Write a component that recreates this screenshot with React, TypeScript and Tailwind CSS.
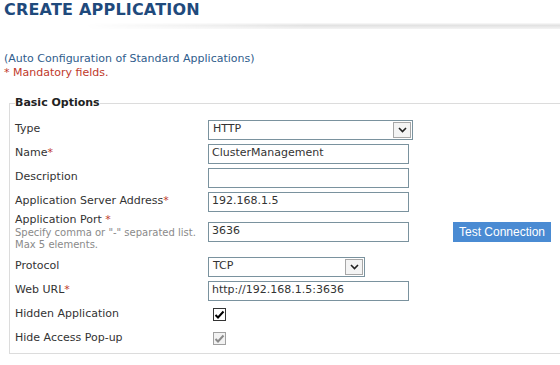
import type { ReactNode } from "react";

const font = "font-['DejaVu_Sans',Verdana,sans-serif]";

function Chevron() {
  return (
    <span className="flex h-[16px] w-[18px] items-center justify-center border border-[#a7a7a7] bg-[#f4f4f4]">
      <svg width="9" height="6" viewBox="0 0 9 6">
        <path d="M1 1 L4.5 4.5 L8 1" fill="none" stroke="#222" strokeWidth="1.6" />
      </svg>
    </span>
  );
}

function Select({ value, width }: { value: string; width: string }) {
  return (
    <div className={`flex h-[20px] ${width} items-center justify-between border border-[#7a929e] bg-white pl-[4px] pr-[1px] text-[11px] text-[#333]`}>
      <span>{value}</span>
      <Chevron />
    </div>
  );
}

function Input({ value = "" }: { value?: string }) {
  return (
    <div className="flex h-[20px] w-[201px] items-center border border-[#7a929e] bg-white px-[3px] text-[11px] text-[#333]">
      {value}
    </div>
  );
}

function Check({ disabled = false }: { disabled?: boolean }) {
  return (
    <span
      className={`ml-[5px] flex h-[13px] w-[13px] items-center justify-center border ${
        disabled ? "border-[#a0a0a0] bg-[#f2f2f2]" : "border-[#333] bg-white"
      }`}
    >
      <svg width="11" height="10" viewBox="0 0 11 10">
        <path
          d="M1.5 5 L4 7.5 L9.5 1.5"
          fill="none"
          stroke={disabled ? "#8a8a8a" : "#000"}
          strokeWidth="2"
        />
      </svg>
    </span>
  );
}

function Row({ label, req = false, children }: { label: string; req?: boolean; children: ReactNode }) {
  return (
    <div className="flex h-[20px] items-center">
      <div className="w-[193px] text-[11px] text-[#333]">
        {label}
        {req && <span className="text-[#c0392b]">*</span>}
      </div>
      {children}
    </div>
  );
}

export default function App() {
  return (
    <div className={`h-[365px] w-[560px] overflow-hidden bg-white ${font}`}>
      <h1 className="pl-[4px] pt-[1px] text-[16px] font-bold leading-[18px] tracking-[0.2px] text-[#1f4a7c]">
        CREATE APPLICATION
      </h1>
      <div className="mt-[4px] h-[6px] bg-[linear-gradient(to_bottom,#fafafa,#e2e2e2_40%,#f4f4f4)] [mask-image:linear-gradient(to_right,transparent_15%,black_55%)]" />

      <div className="mt-[23px] pl-[4px] text-[11px] leading-[14px]">
        <p className="text-[#2f5d8c]">(Auto Configuration of Standard Applications)</p>
        <p className="text-[#c0392b]">* Mandatory fields.</p>
      </div>

      <fieldset className="ml-[9px] mt-[15px] w-[580px] border border-[#dcdcdc] pb-[4px] pl-[5px] pt-[8px]">
        <legend className="px-0 text-[11px] font-bold text-[#222]">Basic Options</legend>
        <div className="flex flex-col gap-[4px]">
          <Row label="Type">
            <Select value="HTTP" width="w-[205px]" />
          </Row>
          <Row label="Name" req>
            <Input value="ClusterManagement" />
          </Row>
          <Row label="Description">
            <Input />
          </Row>
          <Row label="Application Server Address" req>
            <Input value="192.168.1.5" />
          </Row>
          <div className="-mt-[3px] flex items-start pb-[2px]">
            <div className="w-[193px] text-[#333]">
              <div className="text-[11px] leading-[14px]">
                Application Port <span className="text-[#c0392b]">*</span>
              </div>
              <div className="text-[10px] leading-[12px] text-[#8a8a8a]">
                Specify comma or "-" separated list.
                <br />
                Max 5 elements.
              </div>
            </div>
            <div className="mt-[9px]">
              <Input value="3636" />
            </div>
            <button className="ml-[44px] mt-[9px] h-[20px] w-[98px] bg-[#4a8bd3] font-['Liberation_Sans',Arial,sans-serif] text-[12px] text-white">
              Test Connection
            </button>
          </div>
          <Row label="Protocol">
            <Select value="TCP" width="w-[157px]" />
          </Row>
          <Row label="Web URL" req>
            <Input value="http://192.168.1.5:3636" />
          </Row>
          <Row label="Hidden Application">
            <Check />
          </Row>
          <Row label="Hide Access Pop-up">
            <Check disabled />
          </Row>
        </div>
      </fieldset>
    </div>
  );
}
